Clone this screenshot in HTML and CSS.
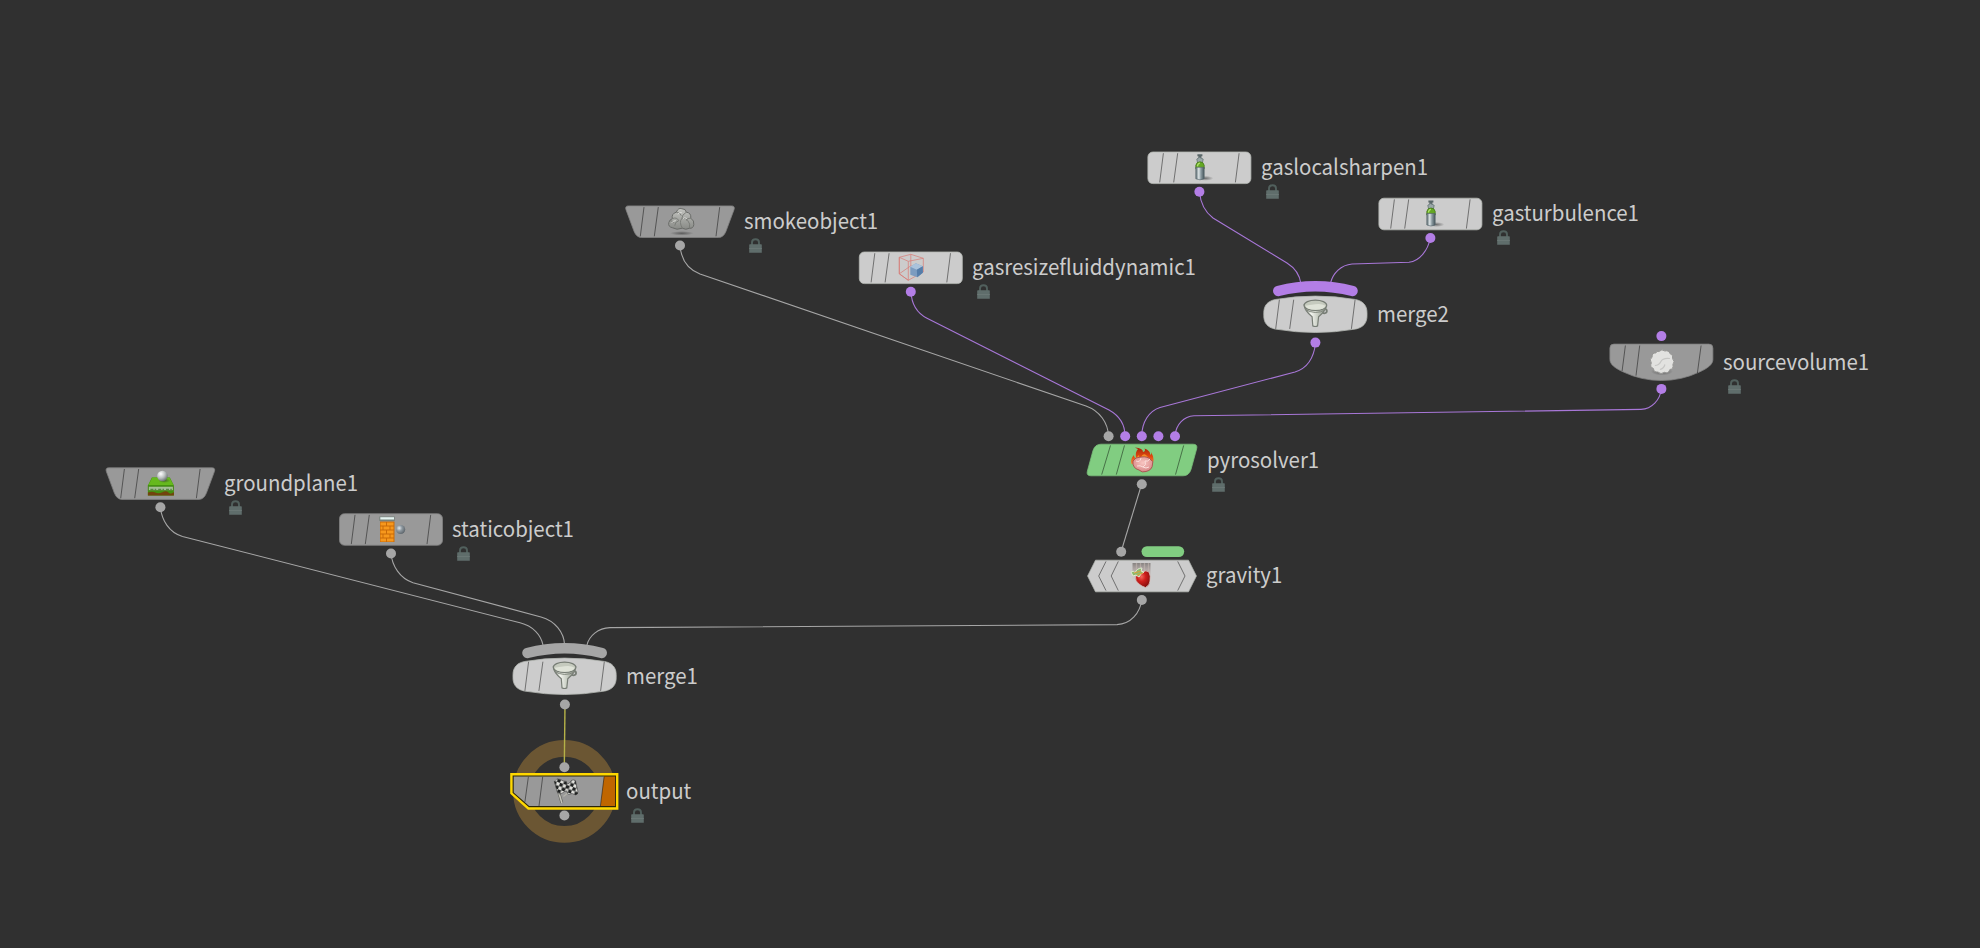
FILE: index.html
```
<!DOCTYPE html>
<html lang="en">

<head>
  <meta charset="utf-8">
  <title>Pyro network</title>
  <link rel="stylesheet" href="styles.css">
</head>

<body>
  <!-- shared shapes, all centered on 0,0 -->
  <svg class="defs">
    <defs>
      <radialGradient id="ball" cx=".35" cy=".3" r=".8">
        <stop offset="0" stop-color="#fff" />
        <stop offset=".5" stop-color="#b9bfbe" />
        <stop offset="1" stop-color="#59605f" />
      </radialGradient>
      <radialGradient id="steel" cx=".35" cy=".35" r=".7">
        <stop offset="0" stop-color="#e4eaee" />
        <stop offset=".45" stop-color="#8d979e" />
        <stop offset="1" stop-color="#5c646a" />
      </radialGradient>
      <linearGradient id="metal">
        <stop offset="0" stop-color="#7d837b" />
        <stop offset=".3" stop-color="#f4f6f0" />
        <stop offset=".6" stop-color="#c9cec4" />
        <stop offset="1" stop-color="#858b82" />
      </linearGradient>
      <linearGradient id="tank">
        <stop offset="0" stop-color="#56666c" />
        <stop offset=".35" stop-color="#dce4e6" />
        <stop offset=".6" stop-color="#8d9ca2" />
        <stop offset="1" stop-color="#46555b" />
      </linearGradient>
      <linearGradient id="fire" x2="0" y2="1">
        <stop offset="0" stop-color="#a5230a" />
        <stop offset=".5" stop-color="#e2490f" />
        <stop offset="1" stop-color="#f3a04a" />
      </linearGradient>
      <linearGradient id="trail" x2="0" y2="1">
        <stop offset="0" stop-color="#858280" />
        <stop offset="1" stop-color="#c9a9a4" stop-opacity=".1" />
      </linearGradient>
      <linearGradient id="cloud" x2="0" y2="1">
        <stop offset="0" stop-color="#c4c5c1" />
        <stop offset="1" stop-color="#888a86" />
      </linearGradient>
      <radialGradient id="berry" cx=".4" cy=".35" r=".7">
        <stop offset="0" stop-color="#f06a5c" />
        <stop offset=".4" stop-color="#cf1f1c" />
        <stop offset="1" stop-color="#7e0d0c" />
      </radialGradient>
      <radialGradient id="meat" cx=".5" cy=".4" r=".7">
        <stop offset="0" stop-color="#f8c6c2" />
        <stop offset="1" stop-color="#d27d7d" />
      </radialGradient>
      <radialGradient id="shadow">
        <stop offset="0" stop-color="#333" stop-opacity=".6" />
        <stop offset="1" stop-color="#333" stop-opacity="0" />
      </radialGradient>
      <pattern id="check" width="6.8" height="6.8" patternUnits="userSpaceOnUse" patternTransform="rotate(18)">
        <rect width="6.8" height="6.8" fill="#dfdfdb" />
        <path d="M0 0h3.4v3.4H0zM3.4 3.4h3.4v3.4H3.4z" fill="#1f2121" />
      </pattern>

      <!-- node bodies -->
      <rect id="box" x="-51.5" y="-15.8" width="103" height="31.6" rx="5" />
      <path id="trapezoid" d="M-51.5-15.8H51.5Q55.3-15.8 54-12L46 9.5Q43.5 15.8 38.5 15.8H-38.5Q-43.5 15.8-46 9.5L-54-12Q-55.3-15.8-51.5-15.8z" />
      <path id="barrel" d="M-40-14.8Q0-21.6 40-14.8C48-13.2 51.6-8.5 51.6-1.5V1.5C51.6 8.5 48 13.2 40 14.8Q0 21.6-40 14.8C-48 13.2-51.6 8.5-51.6 1.5V-1.5C-51.6-8.5-48-13.2-40-14.8z" />
      <path id="bowl" d="M-47.5-18.4H47.5Q51.5-18.4 51.5-14.4V-3C51.5 1.5 47 5.5 38 9.5Q20 18 0 18T-38 9.5C-47 5.5-51.5 1.5-51.5-3V-14.4Q-51.5-18.4-47.5-18.4z" />
      <path id="slant" d="M-39-15.8H51Q56-15.8 54.6-11L49 9.5Q47 15.8 41 15.8H-51Q-56 15.8-54.6 11L-49-9.5Q-47-15.8-41-15.8z" />
      <path id="hexagon" d="M-46.5-15.8H46.5L54.4 0L46.5 15.8H-46.5L-54.4 0z" />
      <path id="ticks" d="M-36-14.6L-39.7 14.6M-21.7-14.6L-25.7 14.6M39.7-14.6L36 14.6" />
      <path id="arc" d="M-37.2-23.3Q0-32.9 37.2-23.3" />

      <!-- icons -->
      <g id="icon-bottle">
        <ellipse cx="6" cy="10.5" rx="8" ry="2.5" fill="url(#shadow)" />
        <path d="M-2-13.5H3V-11.5H-2zM-1-11.5H2V-8H-1z" fill="#5a6769" />
        <path d="M-2.6-8.7L0-10.5L3.8-8.7L3-5H-1.8z" fill="#9aa7a8" stroke="#657375" stroke-width=".8" />
        <path d="M-3.6 1V-2.5Q-3-6 .6-6T4.8-2.5V1z" fill="#64a824" stroke="#3e7013" stroke-width=".7" />
        <path d="M-2-1.5Q-1.5-4.5.5-4.6" fill="none" stroke="#b2e06e" stroke-width="1.2" />
        <path d="M-3.6-.5H4.8V11Q.6 13-3.6 11z" fill="url(#tank)" stroke="#536168" stroke-width=".6" />
      </g>
      <g id="icon-funnel">
        <ellipse cx="9" cy="-3.2" rx="2.5" ry="2.2" fill="none" stroke="#777d75" stroke-width="1.7" />
        <path d="M-11.2-9.5Q-11-3.5-3.3 2.4L-2.6 11.6Q0 12.8 2.2 11.6L3.2 2.4Q10.8-3.5 11-9.5z" fill="url(#metal)" stroke="#777d75" stroke-width="1.2" />
        <ellipse cy="-9" rx="11.3" ry="5.2" fill="#c5cabe" stroke="#777d75" stroke-width="1.2" />
        <path d="M-10-8.6Q-9-4.6 0-4.5T10-8.6Q6-11 0-10T-10-8.6z" fill="#dfe3d8" />
        <path d="M-10.5-5Q0 1 10.2-4.5" fill="none" stroke="#80867c" stroke-width="1" />
      </g>
      <g id="icon-cloud">
        <ellipse cx="1" cy="11.6" rx="12" ry="2.2" fill="url(#shadow)" />
        <path d="M-8.5 6Q-13 5-12 1Q-11.5-2-8.5-3Q-9.5-8-4.5-9.5Q-2.5-14.3 1-13Q5-13 5.5-9.5Q10.5-9 10-3.5Q13.8-1 13 3Q12.5 7 8.5 6.6Q5 8.6 1.5 6.5Q-4 8.8-8.5 6z" fill="url(#cloud)" stroke="#696b68" stroke-width="1" />
        <path d="M-8.5-3Q-4-5-2-1M-4.5-9.5Q0-9 .5-6M5.5-9.5Q1-7 1-3Q5-5 7-1M10-3.5Q6-4 5.5-1M-2-1Q-6 0-6 4M1-3Q-2 0 1.5 6.5M7-1Q10 2 8.5 6.6M-11-1Q-8-1-7 1" fill="none" stroke="#777975" stroke-width=".9" />
        <path d="M-3-7.5Q-1-10 1-9M-9 1Q-8-1-5-1M2-3Q4-5 6-3" fill="none" stroke="#dbdcd8" stroke-width="1" />
      </g>
      <g id="icon-plane">
        <path d="M-8.5-6H9.5L13.5 2V12H-12.5V2z" fill="#43920f" />
        <path d="M-8-6H9L13 1.5H-12z" fill="#66b91d" />
        <path d="M-12.5 2.5H13.5V7.5H-12.5z" fill="#4d8a24" />
        <path d="M-11.5 3.2H12.5V6.5H-11.5z" fill="#a4bf94" />
        <path d="M-10 5.7H12" stroke="#598746" stroke-width="1.3" stroke-dasharray="3 1.3 1.5 2" />
        <path d="M-12.5 9Q-8 7.5-5 9T2 8.6T8 9T13.5 8.5V12H-12.5z" fill="#72430d" />
        <ellipse cx="4" cy="-3" rx="6" ry="2.3" fill="url(#shadow)" />
        <circle cx="2" cy="-7.6" r="5.3" fill="url(#ball)" />
      </g>
      <g id="icon-wall">
        <path d="M-11-8H3.5V12.5H-11z" fill="#c96a08" />
        <path d="M-10.5-7h5.5v3h-5.5zM-4-7h6.5v3H-4zM-10.5-3h2v3h-2zM-7.5-3h6v3h-6zM-.5-3h3v3h-3zM-10.5 1h5.5v3h-5.5zM-4 1h6.5v3H-4zM-10.5 5h2v3h-2zM-7.5 5h6v3h-6zM-.5 5h3v3h-3zM-10.5 9h5.5v3h-5.5zM-4 9h6.5v3H-4z" fill="#f7981d" />
        <path d="M-11.7-13H3.8V-8.5H-11.7z" fill="#78837d" />
        <path d="M-10.7-12.3H3V-10H-10.7z" fill="#e3f2ef" />
        <circle cx="9.6" cy="0" r="4.6" fill="url(#steel)" />
      </g>
      <g id="icon-resize">
        <path d="M-11.5-10.5L0-13.5L12.5-9.5L-2.5-6.5zV6L-2.5 12.5V-6.5M12.5-9.5V4L-2.5 12.5M0-13.5V-2L-11.5 6M0-2L12.5 4" fill="none" stroke="#d77a75" stroke-width="1" opacity=".7" />
        <path d="M-11.5-10.5V6L-2.5 12.5" fill="none" stroke="#d77a75" stroke-width="1" opacity=".7" />
        <path d="M-.5-1L5-4.5L12-1.5V5L6.5 9.5L-.5 7z" fill="#7c9cc0" />
        <path d="M-.5-1L5-4.5L12-1.5L6 2z" fill="#aac3dc" />
        <path d="M6 2L12-1.5V5L6.5 9.5z" fill="#557da9" />
      </g>
      <g id="icon-puff">
        <ellipse cx="0" cy="10" rx="11" ry="4" fill="url(#shadow)" />
        <path d="M-3-10Q0-13 3-10.5Q7-11.5 8-8Q12-6.5 10.6-3Q13.5 0 11 3Q12 7.5 8 8Q6.5 12.5 2.5 10.8Q-1 13.5-4 10.5Q-8 11-8.5 7Q-12.5 5.5-10.6 1.5Q-13-2-9.8-4.5Q-10-9-6-8.5Q-5.5-11-3-10z" fill="#e2e2e0" stroke="#979795" stroke-width="1" />
        <path d="M-7 4Q-3 4-1 0T8-3M-2 8Q2 7 3 3" fill="none" stroke="#c6c6c4" stroke-width="1.2" />
      </g>
      <g id="icon-pyro">
        <path d="M-10.5 4Q-12-1-8-5Q-8-2-6-2Q-7-8-4-11Q-6-12-7-12.5Q1-12 1-8Q4-9 2.5-11.5Q9-9 8-5Q10-6 9-8Q14 0 9 6Z" fill="url(#fire)" />
        <path d="M-8 2Q-6-3-3-5Q-3-1-1-3Q1-7 4-5Q8-2 8 3z" fill="#f58a25" />
        <path d="M-9 1Q-7-3-1-3Q6-4 9 0Q12 1 10.5 4Q10.5 10 4 11.5Q0 13-3 10Q-10 8-9 1z" fill="url(#meat)" stroke="#a6504d" stroke-width=".9" />
        <path d="M-6 1Q-2 3-1-2M1 7Q5 5 3 1Q6 2 8-1M-5 6Q-2 5 1 7T7 7" fill="none" stroke="#fbdedb" stroke-width="1" />
      </g>
      <g id="icon-apple">
        <path d="M-9.5-13H8.5V3H-9.5z" fill="url(#trail)" />
        <path d="M-5.5-13V-4M-1.5-13V-5M2.5-13V-4M6.5-13V-3" stroke="#c4b7b2" stroke-width="1.3" opacity=".6" />
        <path d="M-6.5 1Q-5-3 0-3.5Q4-6.5 7-4Q9 0 8 5Q8 9 3.5 11.5Q0 10.5-3 8Q-7 5-6.5 1z" fill="url(#berry)" stroke="#d8c1bd" stroke-width=".8" />
        <path d="M-11-4Q-8-6-7-3Q-5-8 0-8L-1-5L2-4L-1-2L-3 1L-6-1L-9 0z" fill="#8fbb6d" stroke="#dfe9d2" stroke-width="1" />
        <path d="M-8-3L-1-5M-5-1L1-3" stroke="#d3a240" stroke-width="1.1" />
      </g>
      <g id="icon-flags">
        <path d="M-9-10L-2.5 11.5" stroke="#5f5f5b" stroke-width="2.8" />
        <path d="M-9-10L-2.5 11.5" stroke="#c3c3ba" stroke-width="1.6" />
        <path d="M4 1L-1 5" stroke="#b2b2aa" stroke-width="1.3" />
        <path d="M-10-10Q-8-14-4-12Q-2-10 2-10L4 0Q0-1-2 1.5Q-5 4-7 1z" fill="url(#check)" stroke="#333" stroke-width=".5" />
        <path d="M2-7Q5-7 7-11Q9-12 11-11L13.5 0Q14 3 11 3.5Q8 1 4 3L1-2z" fill="url(#check)" stroke="#333" stroke-width=".5" />
      </g>
      <symbol id="lock" viewBox="0 0 13 15">
        <path d="M3 7V4.4Q3 1.3 6.5 1.3T10 4.4V7" fill="none" stroke="#51605d" stroke-width="1.9" />
        <path d="M1 6.2H12Q12.8 6.2 12.8 7V14.8H.2V7Q.2 6.2 1 6.2z" fill="#5f6d6b" />
        <path d="M.2 10.5H12.8" stroke="#6a7775" stroke-width="1" />
      </symbol>
    </defs>
  </svg>

  <div class="network">
    <svg class="wires" viewBox="0 0 1980 948">
      <circle class="ring" cx="564.4" cy="791.4" r="43" />
      <g class="wire">
        <path d="M160.5 507C161.5 520 169 532.5 182.5 536.5L520 622.8C533 626 541 635 543 645" />
        <path d="M391 553C392 566 400 578.5 413 582.7L541 617C555 621 564 632 564.6 645" />
        <path d="M680 245.5C681 258 687 269 700 274L1086 406C1100 411 1108 423 1108.5 436" />
        <path d="M1141.7 484L1121 552" />
        <path d="M1141.7 600C1140 613 1131 624 1117 624.6L610 627.6C598 628 589 636 587 645" />
      </g>
      <g class="wire purple">
        <path d="M911 292C911.5 303 917 313 927 318.3L1109 410C1119 415.5 1125 425 1125 436" />
        <path d="M1199.5 192C1200.5 203 1205 212 1213 218L1287 263C1295 268 1300 276 1301 284" />
        <path d="M1430.3 238C1428 250 1420 261 1409 262.3L1352 264C1341 265 1333 273 1330.5 283" />
        <path d="M1315.5 343C1314 357 1308 368 1295 372L1160 407.5C1149 411 1142 422 1141.7 436" />
        <path d="M1661.4 389C1660 400 1652 409 1641 409.4L1194 415.8C1184 416.5 1176 424 1175 436" />
      </g>
      <path class="wire selected-wire" d="M565 704L564.3 767" />
    </svg>

    <div class="node wide groundplane">
      <svg viewBox="-56.4 -19.6 112 40">
        <use href="#trapezoid" class="body dark" /><use href="#ticks" class="ticks" />
        <use href="#icon-plane" /><circle class="dot" cy="23.7" r="5" />
      </svg>
      <div class="info"><span class="label">groundplane1</span><svg class="lock"><use href="#lock" /></svg></div>
    </div>

    <div class="node staticobject">
      <svg viewBox="-56 -19.5 112 40">
        <use href="#box" class="body dark" /><use href="#ticks" class="ticks" />
        <use href="#icon-wall" /><circle class="dot" cy="24" r="5" />
      </svg>
      <div class="info"><span class="label">staticobject1</span><svg class="lock"><use href="#lock" /></svg></div>
    </div>

    <div class="node wide smokeobject">
      <svg viewBox="-56 -19.7 112 40">
        <use href="#trapezoid" class="body dark" /><use href="#ticks" class="ticks" />
        <use href="#icon-cloud" x=".8" /><circle class="dot" cy="23.8" r="5" />
      </svg>
      <div class="info"><span class="label">smokeobject1</span><svg class="lock"><use href="#lock" /></svg></div>
    </div>

    <div class="node gasresize">
      <svg viewBox="-55.8 -19.8 112 40">
        <use href="#box" class="body" /><use href="#ticks" class="ticks" />
        <use href="#icon-resize" /><circle class="dot purple" cy="24" r="5" />
      </svg>
      <div class="info"><span class="label">gasresizefluiddynamic1</span><svg class="lock"><use href="#lock" /></svg></div>
    </div>

    <div class="node gassharpen">
      <svg viewBox="-55.4 -19.8 112 40">
        <use href="#box" class="body" /><use href="#ticks" class="ticks" />
        <use href="#icon-bottle" /><circle class="dot purple" cy="24" r="5" />
      </svg>
      <div class="info"><span class="label">gaslocalsharpen1</span><svg class="lock"><use href="#lock" /></svg></div>
    </div>

    <div class="node gasturbulence">
      <svg viewBox="-55.4 -20 112 40">
        <use href="#box" class="body" /><use href="#ticks" class="ticks" />
        <use href="#icon-bottle" /><circle class="dot purple" cy="24" r="5" />
      </svg>
      <div class="info"><span class="label">gasturbulence1</span><svg class="lock"><use href="#lock" /></svg></div>
    </div>

    <div class="node merge2">
      <svg viewBox="-55.4 -19.3 112 40">
        <use href="#arc" class="arc purple" />
        <use href="#barrel" class="body" /><use href="#ticks" class="ticks" />
        <use href="#icon-funnel" /><circle class="dot purple" cy="28.3" r="5" />
      </svg>
      <div class="info"><span class="label">merge2</span></div>
    </div>

    <div class="node sourcevolume">
      <svg viewBox="-55.4 -19.5 112 40">
        <circle class="dot purple" cy="-26.4" r="5" />
        <use href="#bowl" class="body dark" />
        <path class="ticks" d="M-36-17L-39.3 8.5M-21.7-17L-25.4 13.2M39.7-17L36 10.5" />
        <use href="#icon-puff" x=".5" y="-1" /><circle class="dot purple" cy="26.4" r="5" />
      </svg>
      <div class="info"><span class="label">sourcevolume1</span><svg class="lock"><use href="#lock" /></svg></div>
    </div>

    <div class="node wide pyrosolver">
      <svg viewBox="-55 -19 112 40">
        <circle class="dot" cx="-33.4" cy="-23.8" r="5" />
        <circle class="dot purple" cx="-16.8" cy="-23.8" r="5" />
        <circle class="dot purple" cx="-.2" cy="-23.8" r="5" />
        <circle class="dot purple" cx="16.4" cy="-23.8" r="5" />
        <circle class="dot purple" cx="33" cy="-23.8" r="5" />
        <use href="#slant" class="body green" />
        <path class="ticks" d="M-31.5-14.6L-40.3 14.6M-17.5-14.6L-25.7 14.6M41.7-14.6L33.5 14.6" />
        <use href="#icon-pyro" /><circle class="dot" cx="-.2" cy="24.3" r="5" />
      </svg>
      <div class="info"><span class="label">pyrosolver1</span><svg class="lock"><use href="#lock" /></svg></div>
    </div>

    <div class="node wide gravity">
      <svg viewBox="-56 -20 112 40">
        <circle class="dot" cx="-20.8" cy="-24.2" r="5" />
        <rect class="dot green" x="-.5" y="-29.8" width="42.7" height="10.8" rx="5.4" />
        <use href="#hexagon" class="body" />
        <path class="ticks" d="M-36-14.6L-43.3 0L-36 14.6M-23.7-14.6L-30.8 0L-23.7 14.6M35.7-14.6L43 0L35.7 14.6" />
        <use href="#icon-apple" /><circle class="dot" cx="-.2" cy="24" r="5" />
      </svg>
      <div class="info"><span class="label">gravity1</span></div>
    </div>

    <div class="node merge1">
      <svg viewBox="-55.6 -19.3 112 40">
        <use href="#arc" class="arc" />
        <use href="#barrel" class="body" /><use href="#ticks" class="ticks" />
        <use href="#icon-funnel" /><circle class="dot" cx=".3" cy="28.2" r="5" />
      </svg>
      <div class="info"><span class="label">merge1</span></div>
    </div>

    <div class="node output">
      <svg viewBox="-55.4 -19.4 112 40">
        <circle class="dot" cy="-24.1" r="5" /><circle class="dot" cy="24.1" r="5" />
        <path class="body dark" d="M-51.7-15.8H51.7V15.8H-35.5L-51.7 2.5z" />
        <path class="flag" d="M39.7-15.3H51.3V15.3H36z" />
        <path class="ticks" d="M-36-14.6L-39.5 10.5M-21.7-14.6L-25.4 14.6M39.7-14.6L36 14.6" />
        <use href="#icon-flags" />
        <path class="selected-inner" d="M-51.5-15.8H51.5V15.5H-35.5L-51.5 1.5z" />
        <path class="selected" d="M-53-17.1H52.8V17.1H-36L-53 1.9z" />
      </svg>
      <div class="info"><span class="label">output</span><svg class="lock"><use href="#lock" /></svg></div>
    </div>
  </div>
</body>

</html>
```
FILE: styles.css
```
/* variables */
:root {
  --bg-color: #303030;
  --font-color: #cccccc;
  --light: #cccccc;
  --dark: #999999;
  --wire: #a6a6a6;
  --purple: #b37ee6;
  --green: #81cd81;
  --selected: #ffd800;
}

/* global */
* {
  box-sizing: border-box;
}

body,
html {
  margin: 0;
  padding: 0;
  overflow: hidden;
  background: var(--bg-color);
  color: var(--font-color);
  font-family: "Noto Sans CJK JP", "Open Sans", sans-serif;
}

svg {
  display: block;
  overflow: visible;
}

.defs {
  position: absolute;
  width: 0;
  height: 0;
}

.network {
  position: relative;
  width: 1980px;
  height: 948px;
}

/* wires */
.wires {
  position: absolute;
  left: 0;
  top: 0;
  width: 1980px;
  height: 948px;
}

.wire {
  fill: none;
  stroke: var(--wire);
  stroke-width: 1.1;
}

.wire.purple {
  stroke: #a877d8;
}

.selected-wire {
  stroke: #b5b148;
  stroke-width: 1.4;
}

.ring {
  fill: none;
  stroke: #6b5633;
  stroke-width: 16.6;
}

/* nodes */
.node {
  position: absolute;
  display: flex;
  gap: 5px;
}

.node.wide {
  gap: 8px;
}

.node > svg {
  width: 112px;
  height: 40px;
  flex: none;
}

.info {
  display: flex;
  flex-direction: column;
}

.label {
  height: 36px;
  line-height: 36px;
  font-size: 21.5px;
  white-space: nowrap;
  transform: scaleX(0.95);
  transform-origin: left;
}

.lock {
  width: 13px;
  height: 15px;
  margin-left: 5px;
}

.body {
  fill: var(--light);
  stroke: #b5b9b4;
  stroke-width: 0.8;
}

.body.dark {
  fill: var(--dark);
  stroke: #828282;
}

.body.green {
  fill: var(--green);
  stroke: #79bd79;
}

.ticks {
  fill: none;
  stroke: #000;
  stroke-opacity: 0.45;
  stroke-width: 1;
}

.dot {
  fill: var(--wire);
}

.dot.purple {
  fill: var(--purple);
}

.dot.green {
  fill: var(--green);
}

.arc {
  fill: none;
  stroke: var(--wire);
  stroke-width: 10.4;
  stroke-linecap: round;
}

.arc.purple {
  stroke: var(--purple);
}

.flag {
  fill: #c06600;
}

.selected {
  fill: none;
  stroke: var(--selected);
  stroke-width: 2.4;
}

.selected-inner {
  fill: none;
  stroke: #2b2508;
  stroke-width: 1.6;
}

/* places on the canvas */
.groundplane { left: 104px; top: 464px; }
.staticobject { left: 335px; top: 510px; }
.smokeobject { left: 624px; top: 202px; }
.gasresize { left: 855px; top: 248px; }
.gassharpen { left: 1144px; top: 148px; }
.gasturbulence { left: 1375px; top: 194px; }
.merge2 { left: 1260px; top: 295px; }
.sourcevolume { left: 1606px; top: 343px; }
.pyrosolver { left: 1087px; top: 441px; }
.gravity { left: 1086px; top: 556px; }
.merge1 { left: 509px; top: 657px; }
.output { left: 509px; top: 772px; }
```
